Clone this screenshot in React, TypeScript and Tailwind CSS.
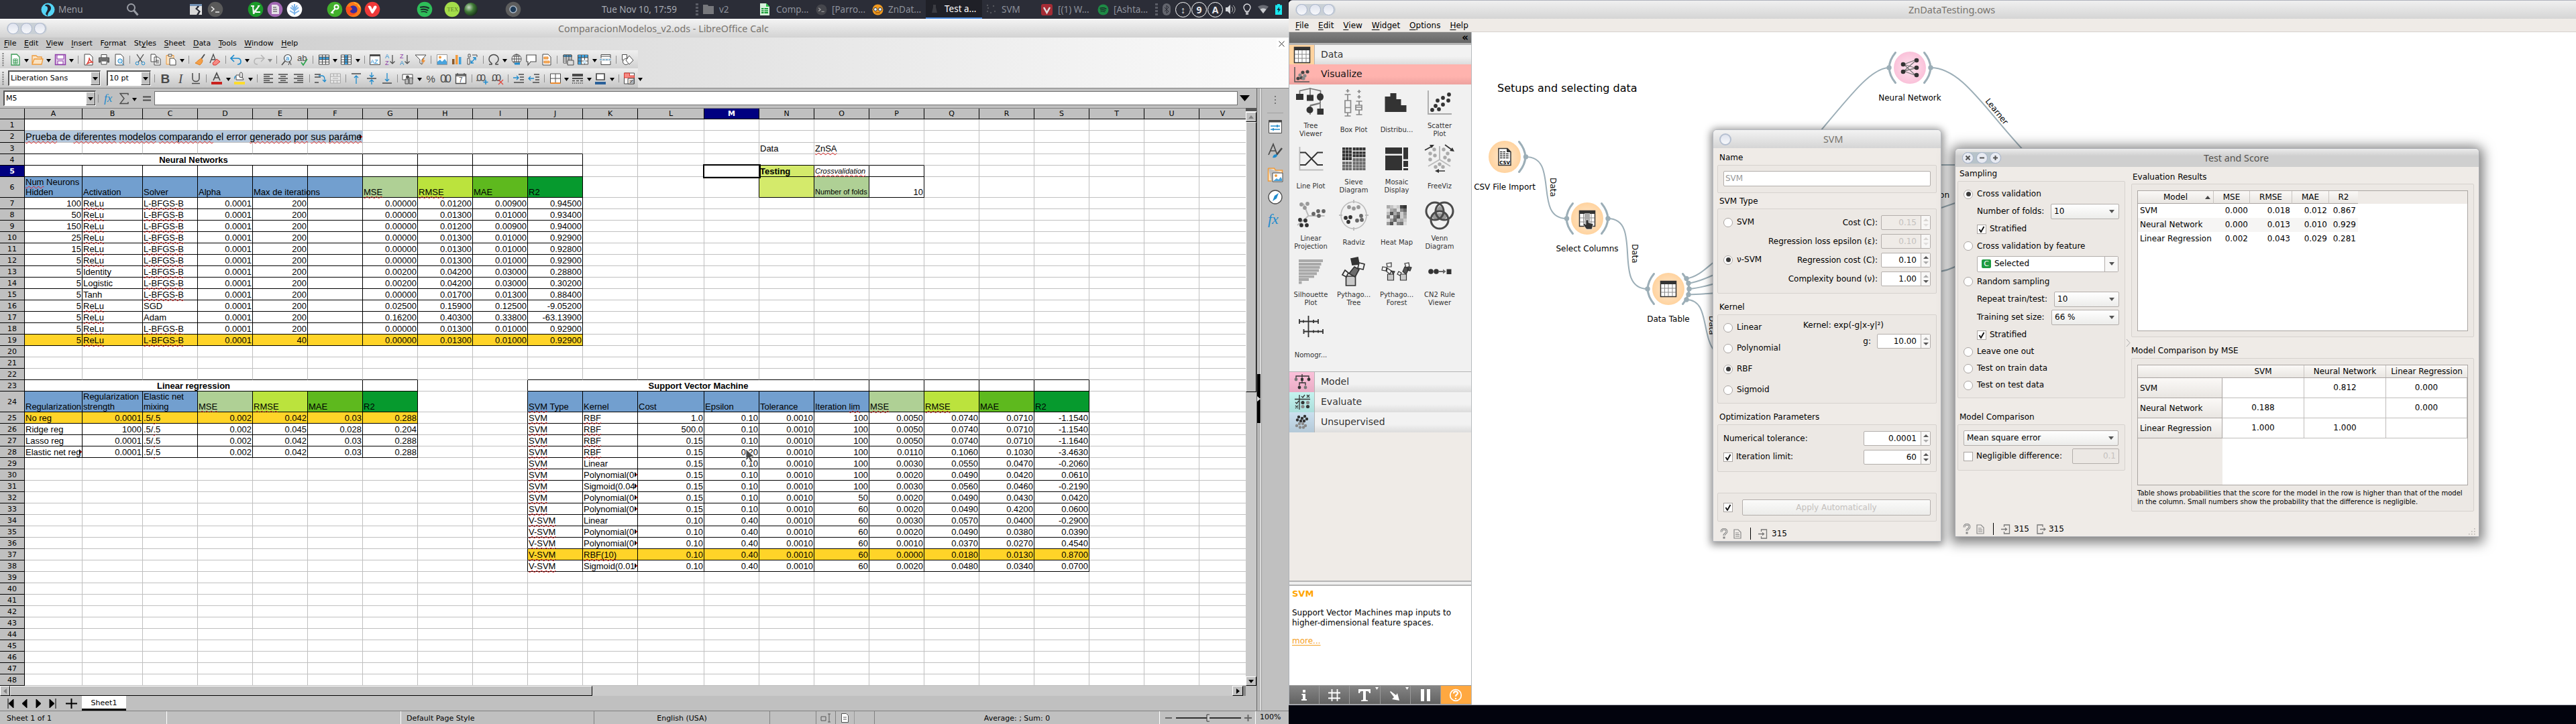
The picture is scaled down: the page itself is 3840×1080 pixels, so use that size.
import React from "react";

type Kids = { children?: React.ReactNode };

/* ------------------------------------------------------------------ */
/* Desktop panel                                                       */
/* ------------------------------------------------------------------ */

function Slot({ w, children }: Kids & { w: string }) {
  return <div className={"flex h-[28px] shrink-0 items-center " + w}>{children}</div>;
}

function Disc({ c, children }: Kids & { c: string }) {
  return (
    <svg className="shrink-0" width="24" height="24" viewBox="0 0 24 24">
      <circle cx="12" cy="12" r="11.3" fill={c} />
      {children}
    </svg>
  );
}

const Spot = ({ c = "#2ebd59", s = "24" }: { c?: string; s?: string }) => (
  <svg className="shrink-0" width={s} height={s} viewBox="0 0 24 24" fill="none" stroke="#1c2a2a" strokeLinecap="round">
    <circle cx="12" cy="12" r="11.3" fill={c} stroke="none" />
    <path d="M6 8.800c4-1.200 8.500-.8 12 1.200" strokeWidth="2.200" />
    <path d="M6.600 12.300c3.500-1 7-.6 10 1.100" strokeWidth="1.800" />
    <path d="M7.200 15.600c3-.8 5.600-.5 8 .9" strokeWidth="1.500" />
  </svg>
);

const Dots = () => (
  <svg width="6" height="20" viewBox="0 0 6 20" fill="#5b5d66">
    <rect x="1" y="1" width="4" height="3" />
    <rect x="1" y="6" width="4" height="3" />
    <rect x="1" y="11" width="4" height="3" />
    <rect x="1" y="16" width="4" height="3" />
  </svg>
);

function Panel() {
  return (
    <div className="flex h-[28px] w-[1921px] items-center overflow-hidden bg-[#2b2d37] font-['Noto_Sans'] text-[13.500px] whitespace-nowrap text-[#8d919b]">
      <Slot w="w-[61px]" />
      <Slot w="w-[26px]">
        <svg width="21" height="21" viewBox="0 0 21 21">
          <circle cx="10.500" cy="10.500" r="10" fill="#54d4f5" />
          <path d="M7 3c4-1 8 1 8 5 0 5-5 5-5 12L7 17c1-4 3-5 3-8S9 5 6 5z" fill="#1f2530" />
        </svg>
      </Slot>
      <Slot w="w-[101px]">
        <span className="text-[#9b9da4]">Menu</span>
      </Slot>
      <Slot w="w-[94px]">
        <svg width="20" height="20" viewBox="0 0 20 20" fill="none" stroke="#9a9da5" strokeWidth="2">
          <circle cx="7.500" cy="7.500" r="5.500" />
          <path d="M11.500 11.500l6 7" strokeWidth="3" />
        </svg>
      </Slot>
      <Slot w="w-[27px]">
        <svg width="20" height="20" viewBox="0 0 20 20">
          <path d="M1 2h9l2 4-3 3 5 4-3 5H1z" fill="#d8d8d8" />
          <path d="M13 2h6v16h-5l3-5-5-4 3-3z" fill="#e5e5e5" />
          <path d="M1 2h18v3H1z" fill="#7391b5" />
        </svg>
      </Slot>
      <Slot w="w-[60px]">
        <Disc c="#5a5a5a">
          <path d="M6 8l4 3.500L6 15M12 16h6" stroke="#eee" strokeWidth="1.500" fill="none" />
        </Disc>
      </Slot>
      <Slot w="w-[29px]">
        <Disc c="#1c9a2b">
          <path d="M5 6h5v2l-1 1 1 5 5-6V6h4l-9 13H8L7 8H5z" fill="#f1f1f1" />
          <path d="M12 16h7" stroke="#fff" strokeWidth="2" />
        </Disc>
      </Slot>
      <Slot w="w-[29px]">
        <Disc c="#a268b3">
          <path d="M7 5h8l3 3v11H7z" fill="#e6e1e8" />
          <path d="M9 9h5M9 12h6M9 15h6" stroke="#777" strokeWidth="1.300" />
        </Disc>
      </Slot>
      <Slot w="w-[60px]">
        <Disc c="#ffffff">
          <path d="M12 4v16M6 9l6 5 6-5M5 14l7 4 7-4M8 6l4 6 4-6" stroke="#7fb6ea" strokeWidth="2" fill="none" />
        </Disc>
      </Slot>
      <Slot w="w-[28px]">
        <Disc c="#42b02c">
          <circle cx="14.500" cy="8.500" r="3" fill="none" stroke="#fff" strokeWidth="2" />
          <path d="M12.500 11l-6 6.500M8 16l2 2" stroke="#fff" strokeWidth="2" />
        </Disc>
      </Slot>
      <Slot w="w-[28px]">
        <Disc c="#ff7a1a">
          <path d="M12 1c6 2 10 5 10.500 10-2-3-4-4-5-7-2 0-4-1-5.500-3z" fill="#ffd43a" />
          <circle cx="11.500" cy="12.500" r="6.200" fill="#3a2f9e" />
          <path d="M1 8c4-1 8 0 9 3 0 2-3 2-3 4 1 3 6 4 9 1 0 4-8 7-12 3-3-3-4-7-3-11z" fill="#ff4f1e" />
        </Disc>
      </Slot>
      <Slot w="w-[78px]">
        <Disc c="#ef3939">
          <path d="M5.500 7.500c2-2 4-1 5 1l1.500 3.500 2-4c1-2 4-2 4.500 0 0 1 0 2-1 3L13 18h-2z" fill="#fff" />
        </Disc>
      </Slot>
      <Slot w="w-[41px]">
        <Spot />
      </Slot>
      <Slot w="w-[29px]">
        <Disc c="#a4dd4a">
          <text x="4.500" y="15" fontSize="8.500" fontFamily="Liberation Serif" fill="#5b7d27">
            TEX
          </text>
        </Disc>
      </Slot>
      <Slot w="w-[62px]">
        <svg width="22" height="22" viewBox="0 0 22 22">
          <defs>
            <radialGradient id="orb" cx=".35" cy=".35" r=".7">
              <stop offset="0" stopColor="#c8d8c4" />
              <stop offset=".5" stopColor="#3f7a35" />
              <stop offset="1" stopColor="#17301a" />
            </radialGradient>
          </defs>
          <circle cx="11" cy="11" r="10" fill="url(#orb)" />
        </svg>
      </Slot>
      <Slot w="w-[144px]">
        <Disc c="#5d5d5d">
          <circle cx="12" cy="12" r="5" fill="#1f3b57" stroke="#a9b6c4" strokeWidth="1.500" />
        </Disc>
      </Slot>
      <Slot w="w-[139px]">
        <span className="text-[#a7abb3]">Tue Nov 10, 17:59</span>
      </Slot>
      <Slot w="w-[12px]">
        <Dots />
      </Slot>
      <Slot w="w-[24px]">
        <svg width="16" height="14" viewBox="0 0 16 14" fill="#77787c">
          <path d="M0 0h7l1 2h8v12H0z" />
        </svg>
      </Slot>
      <Slot w="w-[61px]">v2</Slot>
      <Slot w="w-[24px]">
        <svg width="14" height="18" viewBox="0 0 14 18">
          <path d="M0 0h9l5 5v13H0z" fill="#d6f2da" />
          <path d="M9 0l5 5H9z" fill="#20c840" />
          <path d="M2 7h10v8H2z" fill="#1d9e3b" />
          <path d="M2 9.500h10M2 12h10M6 7v8" stroke="#d6f2da" />
        </svg>
      </Slot>
      <Slot w="w-[59px]">Comp...</Slot>
      <Slot w="w-[24px]">
        <svg width="17" height="17" viewBox="0 0 24 24">
          <circle cx="12" cy="12" r="11.300" fill="#45464c" />
          <path d="M6 8l4 3.500L6 15M12 16h6" stroke="#999" strokeWidth="2" fill="none" />
        </svg>
      </Slot>
      <Slot w="w-[60px]">[Parro...</Slot>
      <Slot w="w-[24px]">
        <svg width="17" height="17" viewBox="0 0 17 17">
          <circle cx="8.500" cy="8.500" r="8" fill="#f0991f" />
          <circle cx="5" cy="8" r="2.500" fill="#e8f4ff" stroke="#333" />
          <circle cx="12" cy="8" r="2.500" fill="#e8f4ff" stroke="#333" />
          <path d="M5 13h7" stroke="#7a3e00" />
        </svg>
      </Slot>
      <Slot w="w-[56px]">ZnDat...</Slot>
      <div className="flex h-[28px] w-[84px] shrink-0 items-center border-b-2 border-[#4a87d8] bg-[#1f2027] pl-[9px] text-white">
        <svg width="8" height="12" viewBox="0 0 8 12" fill="#3b3c42">
          <path d="M2 0h4v4l2 8H0l2-8z" />
        </svg>
        <span className="pl-[11px]">Test a...</span>
      </div>
      <Slot w="w-[29px]">
        <svg className="ml-[6px]" width="16" height="16" viewBox="0 0 16 16" fill="#55575e">
          <circle cx="2" cy="2" r="1.200" />
          <circle cx="3" cy="6" r="1.200" />
          <circle cx="11" cy="3" r="1.200" />
          <circle cx="2" cy="11" r="1.200" />
          <circle cx="7" cy="13" r="1.200" />
          <circle cx="13" cy="11" r="1.200" />
        </svg>
      </Slot>
      <Slot w="w-[59px]">SVM</Slot>
      <Slot w="w-[25px]">
        <svg width="17" height="17" viewBox="0 0 17 17">
          <rect width="17" height="17" rx="3" fill="#a52c35" />
          <path d="M4 5l4.500 8L13 5" stroke="#ddd" strokeWidth="2.500" fill="none" />
        </svg>
      </Slot>
      <Slot w="w-[59px]">[(1) W...</Slot>
      <Slot w="w-[24px]">
        <Spot c="#1e8a45" s="17" />
      </Slot>
      <Slot w="w-[61px]">[Ashta...</Slot>
      <Slot w="w-[12px]">
        <Dots />
      </Slot>
      <Slot w="w-[19px]">
        <svg width="13" height="18" viewBox="0 0 13 18">
          <rect width="12" height="18" rx="6" fill="#63656d" />
          <path d="M3 6l6 6-3 3V3l3 3-6 6" stroke="#2b2d37" fill="none" />
        </svg>
      </Slot>
      {["↕", "9", "A"].map((t) => (
        <Slot key={t} w="w-[24px]">
          <span className="flex size-[23px] items-center justify-center rounded-full border-[1.500px] border-white text-[14px] font-bold text-[#e6e6ea]">{t}</span>
        </Slot>
      ))}
      <Slot w="w-[26px]">
        <svg className="ml-[2px]" width="18" height="16" viewBox="0 0 18 16">
          <path d="M1 5h3l4-4v14l-4-4H1z" fill="#d4d6da" />
          <path d="M10 4c2 2 2 6 0 8M12 2c4 3 4 9 0 12" stroke="#bbb" fill="none" />
        </svg>
      </Slot>
      <Slot w="w-[25px]">
        <svg className="ml-[2px]" width="14" height="18" viewBox="0 0 14 18" fill="none" stroke="#e4e4e8" strokeWidth="1.300">
          <path d="M4.500 12c0-2-2.500-3-2.500-6a5 5 0 0110 0c0 3-2.500 4-2.500 6zM5 14h4M5 16h4" />
        </svg>
      </Slot>
      <Slot w="w-[25px]">
        <svg width="16" height="14" viewBox="0 0 16 14">
          <path d="M0 3c4-3.500 12-3.500 16 0L8 13z" fill="#6a6c74" />
          <path d="M3.500 7c2-2 7-2 9 0L8 13z" fill="#c9cbd0" />
        </svg>
      </Slot>
      <Slot w="w-[12px]">
        <svg width="12" height="16" viewBox="0 0 12 16">
          <path d="M4 0h4v1.500h3V16H1V1.500h3z" fill="#19e6ee" />
          <path d="M7 4L3.500 9H6l-1 4 4-5.500H6.500z" fill="#123" />
        </svg>
      </Slot>
    </div>
  );
}

/* ------------------------------------------------------------------ */
/* Spreadsheet toolbars                                                */
/* ------------------------------------------------------------------ */

const K = "#4a4a4a";
const B = "#1e8bcd";

const sheetIcons: Record<string, React.ReactNode> = {
  new: (
    <>
      <path d="M5 2h8l4 4v12H5z" fill="#fff" stroke="#3a9a56" strokeWidth="1.300" />
      <path d="M8 9h6v7H8zM11 9v7M8 11.500h6M8 14h6" fill="none" stroke="#3a9a56" />
    </>
  ),
  open: <path d="M2 16V4h6l2 2h6v3M2 17l3-8h13l-2 8z" fill="#fbe3c2" stroke="#ed9a3c" strokeWidth="1.300" />,
  save: (
    <>
      <path d="M2.500 2.500h15v15h-15z" fill="#e2c8ea" stroke="#8e3fa8" strokeWidth="1.500" />
      <path d="M5 3h10v6H5zM6 12h8v5H6z" fill="#fff" stroke="#8e3fa8" />
    </>
  ),
  pdf: (
    <>
      <path d="M4 2h8l4 4v12H4z" fill="#fff" stroke={K} />
      <path d="M8 16c4-6 3-8 3-9 0 4 4 7 6 7-3-1-7 1-9 2z" fill="none" stroke="#e0453c" strokeWidth="1.500" />
    </>
  ),
  print: (
    <>
      <path d="M6 2.500h8v5H6zM6 12h8v5H6z" fill="#fff" stroke={K} />
      <path d="M2.500 7h15v7h-2v-3h-11v3h-2z" fill="#777" stroke={K} />
    </>
  ),
  preview: (
    <>
      <path d="M4 2h8l4 4v12H4z" fill="#fff" stroke={K} />
      <circle cx="11" cy="12" r="3.200" fill="#cfe6f7" stroke={B} />
      <path d="M13 14.500l4 4" stroke={B} />
    </>
  ),
  cut: (
    <>
      <path d="M5 2l8 12M15 2L7 14" stroke={K} strokeWidth="1.300" />
      <circle cx="5.500" cy="15.500" r="2.300" fill="none" stroke={B} />
      <circle cx="14.500" cy="15.500" r="2.300" fill="none" stroke={B} />
    </>
  ),
  copy: <path d="M3 2h6l2 3v8H3zM8 6h5l4 3v9H8zM10 11h5M10 13h5M10 15h5" fill="#fff" stroke={K} />,
  paste: (
    <>
      <path d="M3 3.500h11V17H3z" fill="#fbe3c2" stroke="#ed9a3c" />
      <path d="M6 2h5v3H6zM8 8h6l3 3v7H8z" fill="#fff" stroke={K} />
    </>
  ),
  clone: (
    <>
      <path d="M17 2l-5 7" stroke={K} strokeWidth="1.800" />
      <path d="M12 8l-3 2c-3 2-4 4-6 5l7 3c2-2 4-4 4-7z" fill="#f3a04a" stroke="#e07f1c" />
    </>
  ),
  clear: (
    <>
      <path d="M3 15L8 2l4 11M5 10h5" stroke={K} strokeWidth="1.300" fill="none" />
      <path d="M7 15l6-6 5 4-6 5H8z" fill="#f58b85" stroke="#d8352c" />
    </>
  ),
  undo: <path d="M7 3L2 8l5 5M2.500 8H12c3 0 5 2 5 5s-2 4-5 4" fill="none" stroke={B} strokeWidth="1.700" />,
  redo: <path d="M13 3l5 5-5 5M17.500 8H8c-3 0-5 2-5 5s2 4 5 4" fill="none" stroke="#b5b5b5" strokeWidth="1.500" />,
  find: (
    <>
      <circle cx="11" cy="8" r="5.500" fill="#eef6fc" stroke={K} strokeWidth="1.200" />
      <path d="M7 12l-5 6" stroke={K} strokeWidth="1.500" />
      <text x="8" y="11" fontSize="9" fill={B} fontFamily="Liberation Sans">
        a
      </text>
      <path d="M12 18l2-5 2 5" stroke={K} fill="none" />
    </>
  ),
  spell: (
    <>
      <text x="2" y="12" fontSize="13" fill={K} fontFamily="Liberation Sans">
        ab
      </text>
      <path d="M8 14l3 4 6-9" stroke="#2da44e" strokeWidth="1.700" fill="none" />
    </>
  ),
  rows: (
    <>
      <path d="M2.500 3h15v14h-15z" fill="#fff" stroke={K} />
      <path d="M3 6h14v4H3z" fill="#3fa0dc" />
      <path d="M2.500 6h15M2.500 10h15M2.500 13.500h15M7.500 3v14M12.500 3v14" stroke={K} fill="none" />
    </>
  ),
  cols: (
    <>
      <path d="M2.500 3h15v14h-15z" fill="#fff" stroke={K} />
      <path d="M7.500 3h5v14h-5z" fill="#3fa0dc" />
      <path d="M2.500 6h15M2.500 10h15M2.500 13.500h15M7.500 3v14M12.500 3v14" stroke={K} fill="none" />
    </>
  ),
  sort: (
    <>
      <path d="M2.500 2.500h15v15h-15z" fill="#fff" stroke={K} />
      <path d="M2.500 2.500h15v2.500h-15z" fill={K} />
      <text x="3" y="15.500" fontSize="9" fill={B} fontFamily="Liberation Sans">
        AZ
      </text>
    </>
  ),
  asc: (
    <>
      <text x="2" y="8" fontSize="9" fill={B} fontFamily="Liberation Sans">
        A
      </text>
      <text x="2" y="18" fontSize="9" fill="#8e3fa8" fontFamily="Liberation Sans">
        Z
      </text>
      <path d="M13 3v13M9.500 12.500L13 16l3.500-3.500" stroke={K} fill="none" strokeWidth="1.200" />
    </>
  ),
  desc: (
    <>
      <text x="2" y="8" fontSize="9" fill="#8e3fa8" fontFamily="Liberation Sans">
        Z
      </text>
      <text x="2" y="18" fontSize="9" fill={B} fontFamily="Liberation Sans">
        A
      </text>
      <path d="M13 3v13M9.500 12.500L13 16l3.500-3.500" stroke={K} fill="none" strokeWidth="1.200" />
    </>
  ),
  filter: (
    <>
      <path d="M2 3h16l-6 7v7l-3-2v-5z" fill="#fff" stroke={K} />
      <path d="M14 8l-3 5h3l-2 5 5-7h-3l2-3z" fill="#ef8b2c" />
    </>
  ),
  image: (
    <>
      <path d="M2.500 2.500h15v15h-15z" fill="#fff" stroke="#999" />
      <circle cx="7" cy="6.500" r="2" fill="#f29b3d" />
      <path d="M3 17v-4l4-3 3 3 4-4 3 4v4z" fill="#4aa3dc" />
    </>
  ),
  chart: (
    <>
      <path d="M3 9h3.500v8H3z" fill="#8a5a2a" />
      <path d="M8 3h3.500v14H8z" fill="#f29b3d" />
      <path d="M13 6h3.500v11H13z" fill="#3fa0dc" />
    </>
  ),
  pivot: (
    <>
      <path d="M4 2h3v4H4zM10 3h7M3 8v9h3V8zM17 3v3" stroke={K} fill="#fff" />
      <path d="M8 15l7-8M11 7h4v4M8 11v4h4" stroke={B} fill="none" strokeWidth="1.300" />
    </>
  ),
  omega: (
    <path d="M3 17h4v-1.500C4 13.500 3 11 3 9a7 6.500 0 0114 0c0 2-1 4.500-4 6.500V17h4" fill="none" stroke={K} strokeWidth="1.500" />
  ),
  link: (
    <>
      <circle cx="10" cy="9" r="7" fill="#fff" stroke={K} />
      <path d="M3 9h14M10 2v14M5 5h10M5 13h10" stroke={K} fill="none" />
      <ellipse cx="10" cy="9" rx="3.500" ry="7" fill="none" stroke={K} />
      <path d="M7 16h8" stroke={B} strokeWidth="3" />
    </>
  ),
  comment: <path d="M3 3h14v10H9l-4 5v-5H3z" fill="#fff" stroke={K} strokeWidth="1.200" />,
  header: (
    <>
      <path d="M4 2h8l4 4v12H4z" fill="#fff" stroke={K} />
      <path d="M6 6h6v3H6zM6 12h8v3H6z" fill="#f2b36b" stroke="#ef8b2c" />
    </>
  ),
  area: (
    <>
      <path d="M3 3h12v12H3z" fill="#fff" stroke={K} />
      <path d="M3 3h12v3H3z" fill="#3fa0dc" stroke={K} />
      <path d="M3 9h12M3 12h12M7 3v12M11 3v12" stroke={K} />
      <path d="M9 11h9v7H9z" fill="#ddd" stroke={K} />
    </>
  ),
  freeze: (
    <>
      <path d="M2.500 3h15v14h-15z" fill="#fff" stroke={K} />
      <path d="M3 3h4.500v14H3zM3 3h14v4H3z" fill="#3fa0dc" />
      <path d="M2.500 7h15M2.500 12h15M7.500 3v14M12.500 3v14" stroke={K} fill="none" />
      <path d="M8 15l5-5 3 6z" fill="#cfe8f8" />
    </>
  ),
  split: (
    <>
      <path d="M3 8V2.500h14V8M3 12v5.500h14V12" fill="#fff" stroke={K} />
      <path d="M3 5h14" stroke={K} />
      <path d="M1 10h18" stroke={B} strokeDasharray="3 1.500" />
    </>
  ),
  shapes: (
    <>
      <path d="M2.500 2.500h7v8h-7z" fill="#fff" stroke={K} />
      <circle cx="8" cy="13" r="4.500" fill="#fff" stroke={K} />
      <path d="M13 4l6 7-6 6-5-6z" fill="#fff" stroke={K} />
    </>
  ),
  bold: (
    <text x="3.500" y="17" fontSize="19" fontWeight="700" fill={K} fontFamily="Liberation Sans">
      B
    </text>
  ),
  italic: (
    <text x="7" y="17" fontSize="19" fontStyle="italic" fill={K} fontFamily="Liberation Serif">
      I
    </text>
  ),
  under: (
    <>
      <path d="M5 2v8c0 6 10 6 10 0V2M4 17.500h12" fill="none" stroke={K} strokeWidth="1.500" />
    </>
  ),
  fcolor: (
    <>
      <path d="M5 13l5-11 5 11M7 9h6" fill="none" stroke={K} strokeWidth="1.700" />
      <path d="M2 15h16v4H2z" fill="#c9211e" />
    </>
  ),
  hcolor: (
    <>
      <path d="M5 12V5h8l3 7z" fill="#fff" stroke={K} />
      <path d="M12 1c3 0 3 3 2 8l-4-1c0-3 0-7 2-7z" fill="#ddd" stroke={K} />
      <path d="M5 6c-3 0-3 3-3 6z" fill={B} />
      <path d="M2 15h16v4H2z" fill="#fddc2c" />
    </>
  ),
  left: <path d="M3 4h14M3 7h9M3 10h14M3 13h9M3 16h14" stroke={K} strokeWidth="1.300" />,
  center: <path d="M3 4h14M6 7h8M3 10h14M6 13h8M3 16h14" stroke={K} strokeWidth="1.300" />,
  right: <path d="M3 4h14M8 7h9M3 10h14M8 13h9M3 16h14" stroke={K} strokeWidth="1.300" />,
  wrap: (
    <>
      <path d="M2 4h9M2 8h9M2 16h6" stroke={K} strokeWidth="1.300" />
      <path d="M8 6h5c4 0 4 4 4 8M14 12l3 3 2-3" stroke={B} fill="none" strokeWidth="1.300" />
    </>
  ),
  merge: <path d="M2.500 3h15v14h-15zM2.500 7h15M2.500 13h15M7.500 3v4M12.500 3v4M7.500 13v4M12.500 13v4M6 10h8" fill="#e8e8e8" stroke="#aaa" />,
  top: (
    <>
      <path d="M3 3h14" stroke={K} strokeWidth="1.500" />
      <path d="M10 18V6M7 9l3-3 3 3" stroke={B} fill="none" strokeWidth="1.300" />
    </>
  ),
  middle: (
    <>
      <path d="M3 10h14" stroke={K} strokeWidth="1.500" />
      <path d="M10 1v7M7 5l3 3 3-3M10 19v-7M7 15l3-3 3 3" stroke={B} fill="none" strokeWidth="1.300" />
    </>
  ),
  bottom: (
    <>
      <path d="M3 17h14" stroke={K} strokeWidth="1.500" />
      <path d="M10 2v12M7 11l3 3 3-3" stroke={B} fill="none" strokeWidth="1.300" />
    </>
  ),
  money: (
    <>
      <path d="M2 4h15v8H2z" fill="#fff" stroke={K} />
      <circle cx="9.500" cy="8" r="2.500" fill={K} />
      <path d="M6 11h5v7H6zM12 9h5v9h-5z" fill="#bbb" stroke={K} />
    </>
  ),
  percent: (
    <text x="3.500" y="15.500" fontSize="15" fill={K} fontFamily="Liberation Sans">
      %
    </text>
  ),
  number: (
    <text x="1" y="16" fontSize="17" fill={K} fontFamily="Liberation Sans" textLength="17">
      0.0
    </text>
  ),
  date: (
    <>
      <path d="M2.500 4h15v13.500h-15zM2.500 6h15M5 2v3M15 2v3" fill="#fff" stroke={K} strokeWidth="1.300" />
      <text x="7" y="16" fontSize="10" fill={K} fontFamily="Liberation Sans">
        7
      </text>
    </>
  ),
  addDec: (
    <>
      <text x="0" y="14" fontSize="15" fill={K} fontFamily="Liberation Sans" textLength="15">
        .00
      </text>
      <path d="M15 12v7M11.500 15.500h7" stroke={B} strokeWidth="1.500" />
    </>
  ),
  delDec: (
    <>
      <text x="0" y="14" fontSize="15" fill={K} fontFamily="Liberation Sans" textLength="15">
        .00
      </text>
      <path d="M11 12l7 7M18 12l-7 7" stroke="#e0453c" strokeWidth="1.300" />
    </>
  ),
  indent: (
    <>
      <path d="M10 4h8M12 8h6M12 12h6M3 16h15" stroke={K} strokeWidth="1.300" />
      <path d="M2 9h8M7 6l3 3-3 3" stroke={B} fill="none" strokeWidth="1.300" />
    </>
  ),
  outdent: (
    <>
      <path d="M10 4h8M12 8h6M12 12h6M8 16h10" stroke={K} strokeWidth="1.300" />
      <path d="M2 10h8M5 7l-3 3 3 3" stroke={B} fill="none" strokeWidth="1.300" />
    </>
  ),
  borders: (
    <>
      <path d="M2.500 3h15v14h-15zM10 3v14M2.500 10h15" fill="#fff" stroke={K} />
      <path d="M2.500 17h15" stroke="#ef8b2c" strokeWidth="2" />
    </>
  ),
  bstyle: (
    <>
      <path d="M2 3h16v4H2zM2 9h16v2H2z" fill={K} />
      <path d="M2 13.500h16" stroke={K} strokeDasharray="4 2" strokeWidth="1.500" />
      <path d="M2 17h16" stroke={K} strokeDasharray="1.500 1.500" strokeWidth="1.500" />
    </>
  ),
  bcolor: (
    <>
      <path d="M4 3h12v9H4z" fill="#fff" stroke={K} strokeWidth="1.700" />
      <path d="M2 15h16v4H2z" fill="#2a6099" />
    </>
  ),
  cond: (
    <>
      <path d="M2.500 2h15v16h-15z" fill="#fff" stroke={K} />
      <path d="M2.500 2h8v4h7v3h-15z" fill="#f58b85" stroke="#d8352c" />
      <path d="M8 10h9v8H8z" fill="#eee" stroke={K} />
      <text x="9.500" y="17" fontSize="9" fill={K} fontFamily="DejaVu Sans">
        ≠
      </text>
    </>
  ),
};

const line1 =
  "new ▾ open ▾ save ▾ | pdf print preview | cut copy paste ▾ | clone clear | undo ▾ redo ▿ | find spell | rows ▾ cols ▾ | sort asc desc filter | image chart pivot | omega ▾ link comment header | area freeze ▾ split | shapes";
const line2 =
  "| bold italic under | fcolor ▾ hcolor ▾ | left center right | wrap merge | top middle bottom | money ▾ percent number date | addDec delDec | indent outdent | borders ▾ bstyle ▾ bcolor ▾ | cond ▾";

function ToolItems({ spec }: { spec: string }) {
  return (
    <>
      {spec.split(" ").map((n, i) => {
        if (n === "|")
          return (
            <span key={i} className="flex w-[9px] shrink-0 justify-center">
              <span className="h-[12px] w-px bg-[#8f8f8f]" />
            </span>
          );
        if (n === "▾" || n === "▿")
          return (
            <span key={i} className="flex w-[11px] shrink-0 justify-center pt-[3px]">
              <svg width="7" height="5" viewBox="0 0 7 5">
                <path d="M0 0h7L3.500 5z" fill={n === "▾" ? "#000" : "#8a8a8a"} />
              </svg>
            </span>
          );
        return (
          <span key={i} className="flex w-[22.700px] shrink-0 justify-center">
            <svg width="20" height="20" viewBox="0 0 20 20" fill="none">
              {sheetIcons[n]}
            </svg>
          </span>
        );
      })}
    </>
  );
}

function Combo({ text, w }: { text: string; w: string }) {
  return (
    <div className={"flex h-[23px] shrink-0 border-t-2 border-l-2 border-r border-b border-t-[#555] border-r-white border-b-white border-l-[#555] bg-white " + w}>
      <span className="flex-1 pl-[2px] text-[11px] leading-[20px]">{text}</span>
      <span className="flex w-[14px] items-center justify-center border border-t-white border-r-[#333] border-b-[#333] border-l-white bg-[#c0c0c0]">
        <svg width="8" height="5" viewBox="0 0 8 5">
          <path d="M0 0h8L4 5z" />
        </svg>
      </span>
    </div>
  );
}

const Grip = () => (
  <svg className="shrink-0" width="11" height="20" viewBox="0 0 11 20">
    <path d="M4.500 0v20" stroke="#777" strokeWidth="2" strokeDasharray="2 1.500" />
  </svg>
);

const TitleDots = () => (
  <span className="flex h-[17px] items-center gap-[3px] rounded-full bg-[#c9d0d6] px-[1px]">
    {[0, 1, 2].map((i) => (
      <span key={i} className="size-[17px] rounded-full border border-[#a9b4cc] bg-linear-to-b from-[#dfe3ee] to-[#f7f8fb]" />
    ))}
  </span>
);

/* ------------------------------------------------------------------ */
/* Spreadsheet grid                                                    */
/* ------------------------------------------------------------------ */

const colNames = "ABCDEFGHIJKLMNOPQRSTUV".split("");
const colWidth = (c: number) =>
  c === 0 ? "w-[86px]" : c === 1 ? "w-[90px]" : c === 11 ? "w-[99px]" : c === 21 ? "w-[70px]" : "w-[82px]";

type Cell = { t: string; sq?: boolean; bg?: string; b?: boolean; r?: boolean; cls?: string; cut?: boolean };
const cells: Record<string, Cell> = {};
const BLUE = "bg-[#729fcf]";
const GOLD = "bg-[#ffd428]";
const metricBg = ["bg-[#afd095]", "bg-[#bbe33d]", "bg-[#5eb91e]", "bg-[#069a2e]"];

function put(row: number, start: number, items: string[], bg?: string) {
  items.forEach((raw, i) => {
    const sq = raw.startsWith("~");
    const cut = raw.endsWith(">");
    const t = raw.replace(/^~/, "").replace(/>$/, "");
    cells[row + ":" + (start + i)] = { t, sq, cut, bg, r: /^-?\d+(\.\d+)?$/.test(t) };
  });
}

const nn: [string, string, string, string, string, string, string, string][] = [
  ["100", "~ReLu", "~L-BFGS-B", "200", "0.00000", "0.01200", "0.00900", "0.94500"],
  ["50", "~ReLu", "~L-BFGS-B", "200", "0.00000", "0.01300", "0.01000", "0.93400"],
  ["150", "~ReLu", "~L-BFGS-B", "200", "0.00000", "0.01200", "0.00900", "0.94000"],
  ["25", "~ReLu", "~L-BFGS-B", "200", "0.00000", "0.01300", "0.01000", "0.92900"],
  ["15", "~ReLu", "~L-BFGS-B", "200", "0.00000", "0.01300", "0.01000", "0.92800"],
  ["5", "~ReLu", "~L-BFGS-B", "200", "0.00000", "0.01300", "0.01000", "0.92900"],
  ["5", "Identity", "~L-BFGS-B", "200", "0.00200", "0.04200", "0.03000", "0.28800"],
  ["5", "Logistic", "~L-BFGS-B", "200", "0.00200", "0.04200", "0.03000", "0.30200"],
  ["5", "Tanh", "~L-BFGS-B", "200", "0.00000", "0.01700", "0.01300", "0.88400"],
  ["5", "~ReLu", "SGD", "200", "0.02500", "0.15900", "0.12500", "-9.05200"],
  ["5", "~ReLu", "Adam", "200", "0.16200", "0.40300", "0.33800", "-63.13900"],
  ["5", "~ReLu", "~L-BFGS-B", "200", "0.00000", "0.01300", "0.01000", "0.92900"],
  ["5", "~ReLu", "~L-BFGS-B", "40", "0.00000", "0.01300", "0.01000", "0.92900"],
];
put(6, 0, ["Num Neurons Hidden", "Activation", "Solver", "Alpha", "Max de iterations", ""], BLUE);
["~MSE", "~RMSE", "MAE", "R2"].forEach((m, i) => {
  put(6, 6 + i, [m], metricBg[i]);
  put(24, 3 + i, [m], metricBg[i]);
  put(24, 15 + i, [m], metricBg[i]);
});
nn.forEach((v, i) => put(7 + i, 0, [v[0], v[1], v[2], "0.0001", v[3], "", v[4], v[5], v[6], v[7]], i === 12 ? GOLD : undefined));
put(24, 0, ["Regularization", "Regularization strength", "Elastic net mixing"], BLUE);
put(25, 0, ["No reg", "0.0001", ".5/.5", "0.002", "0.042", "0.03", "0.288"], GOLD);
put(26, 0, ["Ridge reg", "1000", ".5/.5", "0.002", "0.045", "0.028", "0.204"]);
put(27, 0, ["Lasso reg", "0.0001", ".5/.5", "0.002", "0.042", "0.03", "0.288"]);
put(28, 0, ["Elastic net reg>", "0.0001", ".5/.5", "0.002", "0.042", "0.03", "0.288"]);
put(24, 9, ["SVM Type", "Kernel", "Cost", "Epsilon", "Tolerance", "Iteration lim"], BLUE);
const svm = [
  "~SVM|~RBF|1.0|0.10|100|0.0050|0.0740|0.0710|-1.1540",
  "~SVM|~RBF|500.0|0.10|100|0.0050|0.0740|0.0710|-1.1540",
  "~SVM|~RBF|0.15|0.10|100|0.0050|0.0740|0.0710|-1.1640",
  "~SVM|~RBF|0.15|0.20|100|0.0110|0.1060|0.1030|-3.4630",
  "~SVM|Linear|0.15|0.10|100|0.0030|0.0550|0.0470|-0.2060",
  "~SVM|Polynomial(0>|0.15|0.10|100|0.0020|0.0490|0.0420|0.0610",
  "~SVM|Sigmoid(0.04>|0.15|0.10|100|0.0030|0.0560|0.0460|-0.2190",
  "~SVM|Polynomial(0>|0.15|0.10|50|0.0020|0.0490|0.0430|0.0420",
  "~SVM|Polynomial(0>|0.15|0.10|60|0.0020|0.0490|0.4200|0.0600",
  "~V-SVM|Linear|0.10|0.40|60|0.0030|0.0570|0.0400|-0.2900",
  "~V-SVM|Polynomial(0>|0.10|0.40|60|0.0020|0.0490|0.0380|0.0390",
  "~V-SVM|Polynomial(0>|0.10|0.40|60|0.0010|0.0370|0.0270|0.4540",
  "~V-SVM|~RBF(10)|0.10|0.40|60|0.0000|0.0180|0.0130|0.8700",
  "~V-SVM|Sigmoid(0.01>|0.10|0.40|60|0.0020|0.0480|0.0340|0.0700",
];
svm.forEach((s, i) => {
  const v = s.split("|");
  put(25 + i, 9, [v[0], v[1], v[2], v[3], "0.0010", ...v.slice(4)], i === 12 ? GOLD : undefined);
});
cells["3:13"] = { t: "Data" };
cells["3:14"] = { t: "ZnSA", sq: true };
cells["5:13"] = { t: "Testing", b: true, bg: "bg-[#d4ea6b]" };
cells["5:14"] = { t: "Crossvalidation", sq: true, cls: "italic text-[11px]" };
cells["6:13"] = { t: "", bg: "bg-[#d4ea6b]" };
cells["6:14"] = { t: "Number of folds", bg: "bg-[#afd095]", cls: "text-[11px]" };
cells["6:15"] = { t: "10", r: true };

const partial: Record<string, [string, string, string]> = {
  "Num Neurons Hidden": ["", "Num", " Neurons Hidden"],
  "SVM Type": ["", "SVM", " Type"],
  "Iteration lim": ["Iteration ", "lim", ""],
  ".5/.5": [".5/", ".", "5"],
};
const WAVE = "underline decoration-[#e02020] decoration-wavy decoration-1 underline-offset-[1px] [text-decoration-skip-ink:none]";

function inTable(r: number, c: number) {
  if (c >= 0 && c <= 9 && r >= 4 && r <= 19) return true;
  if (c >= 0 && c <= 6 && r >= 23 && r <= 28) return true;
  if (c >= 9 && c <= 18 && r >= 23 && r <= 38) return true;
  if (c >= 13 && c <= 15 && r >= 5 && r <= 6) return true;
  return false;
}

function rowH(r: number) {
  return r === 2 ? "h-[18px]" : r === 6 || r === 24 ? "h-[31px]" : "h-[17px]";
}

function GridCell({ r, c }: { r: number; c: number }) {
  const d = cells[r + ":" + c];
  const right = inTable(r, c) || inTable(r, c + 1);
  const bottom = inTable(r, c) || inTable(r + 1, c);
  const base =
    "relative flex shrink-0 items-end border-r border-b " +
    colWidth(c) +
    (right ? " border-r-black" : " border-r-[#c0c0c0]") +
    (bottom ? " border-b-black" : " border-b-[#c0c0c0]");
  if (!d) return <div className={base + (r === 5 && c === 12 ? " outline-2 outline-black z-10" : "")} />;
  const p = partial[d.t];
  const wraps = d.t === "Num Neurons Hidden" || d.t === "Regularization strength" || d.t === "Elastic net mixing";
  return (
    <div className={base + " px-[1px] " + (d.bg || "") + (d.r ? " justify-end" : "") + (d.t.startsWith("Max") ? " z-10" : "")}>
      <span className={(wraps ? "whitespace-normal -mr-[4px] " : "whitespace-nowrap ") + (d.b ? "font-bold " : "") + (d.cls || "") + (d.sq ? " " + WAVE : "")}>
        {p ? (
          <>
            {p[0]}
            <span className={WAVE}>{p[1]}</span>
            {p[2]}
          </>
        ) : (
          d.t
        )}
      </span>
      {d.cut && (
        <svg className="absolute top-[4px] right-0" width="4" height="8" viewBox="0 0 4 8">
          <path d="M0 0l4 4-4 4z" />
          <path d="M2 2.500l2 1.500-2 1.500z" fill="#f00" />
        </svg>
      )}
    </div>
  );
}

function Merged({ text, w }: { text: string; w: string }) {
  return <div className={"shrink-0 border-r border-b border-black text-center leading-[17px] font-bold " + w}>{text}</div>;
}

function GridRow({ r }: { r: number }) {
  const out: React.ReactNode[] = [];
  for (let c = 0; c < 22; c++) {
    if (r === 2 && c === 0) {
      out.push(
        <div key={c} className="relative w-[504px] shrink-0 border-b border-[#c0c0c0] bg-[#b4c7dc] pl-[1px] text-[14.600px] leading-[18px] whitespace-nowrap">
          <span className={WAVE}>Prueba</span> de <span className={WAVE}>diferentes</span> <span className={WAVE}>modelos</span>{" "}
          <span className={WAVE}>comparando</span> el error <span className={WAVE}>generado</span> <span className={WAVE}>por</span>{" "}
          <span className={WAVE}>sus</span> <span className={WAVE}>paráme</span>
          <svg className="absolute top-[5px] right-[1px]" width="4" height="8" viewBox="0 0 4 8">
            <path d="M0 0l4 4-4 4z" />
            <path d="M2 2.500l2 1.500-2 1.500z" fill="#f00" />
          </svg>
        </div>,
      );
      c = 5;
    } else if ((r === 4 || r === 23) && c === 0) {
      out.push(<Merged key={c} w="w-[504px]" text={r === 4 ? "Neural Networks" : "Linear regression"} />);
      c = 5;
    } else if (r === 23 && c === 9) {
      out.push(<Merged key={c} w="w-[509px]" text="Support Vector Machine" />);
      c = 14;
    } else out.push(<GridCell key={c} r={r} c={c} />);
  }
  return (
    <div className={"flex w-[1857px] shrink-0 " + rowH(r)}>
      <div
        className={
          "flex w-[37px] shrink-0 items-center justify-center border-r border-b border-black font-['DejaVu_Sans'] text-[11px] " +
          (r === 5 ? "bg-[#000080] font-bold text-white" : "bg-[#c0c0c0]")
        }
      >
        {r}
      </div>
      {out}
    </div>
  );
}

function Sheet() {
  return (
    <div className="relative flex h-[862px] w-[1857px] flex-col overflow-hidden bg-white font-['Liberation_Sans'] text-[13px] leading-[15px] text-black">
      <div className="flex h-[17px] shrink-0 border-t border-b border-t-[#808080] border-b-black bg-[#c0c0c0] font-['DejaVu_Sans'] text-[11px]">
        <div className="w-[37px] shrink-0 border-r border-black" />
        {colNames.map((n, i) => (
          <div key={n} className={"shrink-0 border-r border-black text-center " + colWidth(i) + (n === "M" ? " bg-[#000080] font-bold text-white" : "")}>
            {n}
          </div>
        ))}
      </div>
      {Array.from({ length: 48 }, (_, i) => (
        <GridRow key={i} r={i + 1} />
      ))}
      <svg className="absolute top-[508px] left-[1111px] z-20" width="14" height="22" viewBox="0 0 14 22">
        <path d="M1 1l12 11-5 .5 3 7-3 1.500-3-7-4 4z" fill="#4a4a4a" stroke="#e6e6e6" />
      </svg>
    </div>
  );
}

/* ------------------------------------------------------------------ */
/* Spreadsheet window                                                  */
/* ------------------------------------------------------------------ */

const bevel = "border border-t-white border-l-white border-r-black border-b-black bg-[#c0c0c0]";

function Menu({ items, className }: { items: string[]; className: string }) {
  return (
    <div className={"flex items-center " + className}>
      {items.map((m) => {
        const i = m.indexOf("_");
        return (
          <span key={m}>
            {m.slice(0, i)}
            <span className="underline underline-offset-2">{m[i + 1]}</span>
            {m.slice(i + 2)}
          </span>
        );
      })}
    </div>
  );
}

const side = (d: React.ReactNode) => (
  <svg width="24" height="24" viewBox="0 0 24 24" fill="none">
    {d}
  </svg>
);

function CalcWindow() {
  return (
    <div className="flex h-[1052px] w-[1921px] flex-col bg-[#c0c0c0] font-['DejaVu_Sans'] text-[11px] text-black">
      <div className="flex h-[28px] items-center border-t border-white bg-linear-to-b from-[#f3f3f3] to-[#d3d3d3]">
        <div className="w-[832px] pl-[10px]">
          <div className="w-[60px]">
            <TitleDots />
          </div>
        </div>
        <span className="font-['Noto_Sans'] text-[14.300px] whitespace-nowrap text-[#77736d]">ComparacionModelos_v2.ods - LibreOffice Calc</span>
      </div>
      <div className="flex h-[75px] bg-linear-to-r from-[#c6c6c6] to-[#fbfbfb]">
        <div className="flex w-[951px] flex-col">
          <Menu className="h-[19px] gap-[11.500px] pl-[6px]" items={["_File", "_Edit", "_View", "_Insert", "F_ormat", "St_yles", "_Sheet", "_Data", "_Tools", "_Window", "_Help"]} />
          <div className="flex h-[27px] items-center bg-linear-to-b from-[#efefef] to-[#d2d2d2]">
            <Grip />
            <ToolItems spec={line1} />
          </div>
          <div className="flex h-[29px] items-center bg-linear-to-b from-[#efefef] to-[#c6c6c6]">
            <Grip />
            <Combo text="Liberation Sans" w="w-[138px] ml-[1px]" />
            <Combo text="10 pt" w="w-[66px] ml-[9px] mr-[1px]" />
            <ToolItems spec={line2} />
          </div>
        </div>
        <div className="flex flex-1 justify-end">
          <span className="mt-[2px] mr-[3px] flex h-[15px] w-[15px] items-center justify-center bg-white">
            <svg width="9" height="9" viewBox="0 0 9 9" stroke="#333">
              <path d="M.5.5l8 8M8.500.5l-8 8" />
            </svg>
          </span>
        </div>
      </div>
      <div className="flex h-[929px] border-t border-[#808080]">
        <div className="flex w-[1873px] flex-col">
          <div className="flex h-[29px] items-center">
            <Combo text="M5" w="w-[138px] ml-[5px] mr-[3px]" />
            <span className="h-[12px] w-px bg-[#8f8f8f]" />
            <svg className="ml-[8px]" width="18" height="20" viewBox="0 0 18 20">
              <text x="0" y="15" fontSize="17" fontStyle="italic" fill={B} fontFamily="Liberation Serif">
                fx
              </text>
            </svg>
            <svg className="ml-[5px]" width="14" height="20" viewBox="0 0 14 20" fill="none" stroke={K} strokeWidth="1.400">
              <path d="M13 5V2.500H1l6 7.500-6 7.500h12V15" />
            </svg>
            <svg className="mt-[3px] ml-[5px]" width="7" height="5" viewBox="0 0 7 5">
              <path d="M0 0h7L3.500 5z" />
            </svg>
            <svg className="ml-[8px]" width="14" height="10" viewBox="0 0 14 10" stroke={K} strokeWidth="2">
              <path d="M1 2.500h12M1 7.500h12" />
            </svg>
            <div className="ml-[4px] h-[21px] w-[1615px] border border-[#707070] bg-white" />
            <svg className="ml-[3px]" width="15" height="9" viewBox="0 0 15 9">
              <path d="M0 0h15L7.500 9z" />
            </svg>
          </div>
          <div className="flex h-[862px]">
            <Sheet />
            <div className="flex w-[16px] flex-col bg-[#c9c9c9]">
              <div className="h-[6px] border-b border-white bg-[#555]" />
              <div className={"flex h-[15px] items-center justify-center " + bevel}>
                <svg width="8" height="5" viewBox="0 0 8 5">
                  <path d="M0 5h8L4 0z" fill="#808080" />
                </svg>
              </div>
              <div className={"h-[403px] " + bevel} />
              <div className="flex-1" />
              <div className={"flex h-[14px] items-center justify-center " + bevel}>
                <svg width="8" height="5" viewBox="0 0 8 5">
                  <path d="M0 0h8L4 5z" />
                </svg>
              </div>
            </div>
          </div>
          <div className="flex h-[15px] w-[1857px] bg-[#cbcbcb]">
            <div className={"flex w-[15px] items-center justify-center " + bevel}>
              <svg width="5" height="8" viewBox="0 0 5 8">
                <path d="M5 0v8L0 4z" fill="#808080" />
              </svg>
            </div>
            <div className={"w-[868px] " + bevel} />
            <div className="flex-1" />
            <div className={"flex w-[16px] items-center justify-center " + bevel}>
              <svg width="5" height="8" viewBox="0 0 5 8">
                <path d="M0 0v8l5-4z" />
              </svg>
            </div>
            <div className="w-[4px] bg-[#888]" />
          </div>
          <div className="flex h-[22px] items-start">
            <svg className="mt-[3px]" width="122" height="17" viewBox="0 0 122 17">
              <path d="M12 1v15M20 2v13l-7-6.500zM40 2v13l-7-6.500zM54 2v13l7-6.500zM74 2v13l7-6.500zM83 1v15" stroke="#000" />
              <path d="M98 8.500h17M106.500 1v15" stroke="#000" strokeWidth="2" />
            </svg>
            <div className="h-[22px] w-[66px] border-b-[3px] border-black bg-white pt-[3px] text-center">Sheet1</div>
          </div>
        </div>
        <div className="flex w-[7px] flex-col border-r border-l border-r-white border-l-[#666] bg-[#b8b8b8]">
          <div className="h-[426px]" />
          <div className="flex h-[73px] items-center justify-center bg-black">
            <svg width="5" height="8" viewBox="0 0 5 8">
              <path d="M0 0v8l5-4z" fill="#ddd" />
            </svg>
          </div>
        </div>
        <div className="flex w-[41px] flex-col items-center border-l border-[#909090] pt-[9px]">
          <svg width="4" height="16" viewBox="0 0 4 16" fill="#777">
            <path d="M1 2h2v2H1zM1 7h2v2H1zM1 12h2v2H1z" />
          </svg>
          <div className="mt-[11px] mb-[8px] h-px w-[24px] bg-[#a0a0a0]" />
          {side(
            <>
              <path d="M2.500 2.500h19v19h-19z" fill="#fff" stroke={K} />
              <path d="M2.500 2.500h19v3h-19z" fill={K} />
              <path d="M5 11h14M5 16h14M15 9v4M9 14v4" stroke={B} strokeWidth="1.500" />
            </>,
          )}
          <div className="h-[12px]" />
          {side(
            <>
              <path d="M2 18L9 2l6 16M4.500 12h9" stroke={K} strokeWidth="1.700" />
              <path d="M22 8l-8 10" stroke={K} strokeWidth="2.500" />
              <path d="M8 22c1-4 4-6 7-4 0 3-3 5-7 4z" fill={B} />
            </>,
          )}
          <div className="h-[12px]" />
          {side(
            <>
              <path d="M1.500 2h9l2 3h10v4M1.500 2v19h5" stroke="#ed9a3c" strokeWidth="1.500" fill="#fbe3c2" />
              <path d="M8 9h15v13H8z" fill="#fff" stroke={K} />
              <circle cx="13" cy="13" r="2" fill="#ed9a3c" />
              <path d="M9 21l5-4 3 2 3-4 2 3v3z" fill="#4aa3dc" />
            </>,
          )}
          <div className="h-[9px]" />
          {side(
            <>
              <circle cx="12" cy="12" r="10" fill="#fff" stroke={K} strokeWidth="1.300" />
              <path d="M17 6l-3 8-6 4 3-8z" fill={B} />
            </>,
          )}
          <div className="h-[10px]" />
          {side(
            <text x="1" y="18" fontSize="22" fontStyle="italic" fill={B} fontFamily="Liberation Serif">
              fx
            </text>,
          )}
        </div>
      </div>
      <div className="flex h-[20px] items-center border-t border-[#808080] whitespace-nowrap">
        <div className="h-full w-[249px] border-r border-white pt-[3px] pl-[10px]">Sheet 1 of 1</div>
        <div className="h-full w-[349px] border-r border-white" />
        <div className="h-full w-[288px] border-r border-[#808080] pt-[3px] pl-[8px]">Default Page Style</div>
        <div className="h-full w-[262px] border-r border-[#808080] pt-[3px] text-center">English (USA)</div>
        <div className="h-full w-[69px] border-r border-[#808080]" />
        <div className="flex h-full w-[29px] items-center justify-center border-r border-[#808080]">
          <svg width="16" height="14" viewBox="0 0 16 14" fill="none" stroke="#555">
            <path d="M1 5h7v6H1zM11 1h4M13 1v12M11 13h4" />
          </svg>
        </div>
        <div className="flex h-full w-[28px] items-center justify-center border-r border-[#999]">
          <svg width="11" height="14" viewBox="0 0 11 14" fill="#fff" stroke="#555">
            <path d="M.5.5h7l3 3v10H.5zM3 6h5M3 9h5" />
          </svg>
        </div>
        <div className="h-full w-[30px] border-r border-[#808080]" />
        <div className="h-full w-[425px] border-r border-white pt-[3px] text-center">Average: ; Sum: 0</div>
        <div className="flex h-full w-[143px] items-center border-r border-white">
          <svg width="142" height="16" viewBox="0 0 142 16" fill="none">
            <path d="M8 8h10M126 8h11M131.500 3v10" stroke="#666" strokeWidth="2" />
            <path d="M24 8h97" stroke="#000" strokeWidth="1.500" />
            <path d="M74 3h-4v10h4" stroke="#333" fill="#ccc" />
          </svg>
        </div>
        <div className="pl-[6px]">100%</div>
      </div>
    </div>
  );
}

/* ------------------------------------------------------------------ */
/* Orange: sidebar                                                     */
/* ------------------------------------------------------------------ */

const D = "#333333";
const G = "#a9a9a9";
const dots = (pts: number[][], r: number, fill: string) => pts.map((p, i) => <circle key={fill + i} cx={p[0]} cy={p[1]} r={r} fill={fill} />);

const heat = ["#aaa", "#c4c4c4", "#ddd", "#ccc", "#444", "#333", "#ddd", "#aaa", "#999", "#ddd", "#888", "#666", "#bbb", "#555", "#aaa", "#777", "#ccc", "#999", "#888", "#ddd", "#777", "#555", "#ccc", "#aaa", "#ddd", "#999", "#666", "#bbb", "#aaa", "#ccc", "#999", "#555", "#ddd", "#888", "#777", "#ddd"];

const widgets: [string, string[], React.ReactNode][] = [
  [
    "tree",
    ["Tree", "Viewer"],
    <>
      <path d="M31 5v14M15.500 16V9.500L31 6l15.500 3.500V20M46 20v8l-15 4v13M31 31l15-3.500V38" stroke="#777" strokeWidth="1.700" fill="none" />
      <path d="M10 14h11v9H10zM26 15.500h10v9H26zM41.500 36h9.500v9h-9.500z" fill={D} />
      <ellipse cx="46" cy="18.500" rx="5" ry="5.500" fill={D} />
      <ellipse cx="30.500" cy="38" rx="5" ry="5" fill={D} />
    </>,
  ],
  [
    "box",
    ["Box Plot"],
    <g stroke="#888" strokeWidth="1.700" fill="none">
      <path d="M23 15v9M18.500 15h9M19 24h8.500v18H19zM19 34.500h8.500M23 42v5M18.500 47h9M40 25v6M35.500 25h9M35 31h9v7h-9zM35 34h9M40 38v7M35.500 45h9M23 7v5M20.500 9.500h5M40 8v5M37.500 10.500h5M40 16v5M37.500 18.500h5" />
    </g>,
  ],
  ["dist", ["Distribu..."], <path d="M14.500 18h8v-5h9v9h7v9h8v10h-32z" fill={D} />],
  [
    "scatter",
    ["Scatter", "Plot"],
    <>
      <path d="M15 9v35h35" stroke={G} strokeWidth="1.800" fill="none" />
      {dots([[46, 15], [37, 20], [45, 24], [29, 24], [37, 30], [26, 32], [21, 38], [31, 37]], 2.900, D)}
    </>,
  ],
  [
    "line",
    ["Line Plot"],
    <>
      <path d="M15.500 9v34.500h35" stroke="#bbb" strokeWidth="1.800" fill="none" />
      <path d="M16 17.500h8l18 18.500h8M16 36h8l18-18.500h8" stroke={D} strokeWidth="2" fill="none" />
    </>,
  ],
  [
    "sieve",
    ["Sieve", "Diagram"],
    <>
      <path d="M15 10h14v19H15zM30.500 10h19v4.500h-19zM30.500 16h19v8.500h-19z" fill={D} />
      <path d="M15 31h14v13H15zM30.500 26h19v18h-19z" fill="#6b6b6b" />
      <path d="M19.500 10v34M24.500 10v34M35 10v34M40 10v34M45 10v34M15 14h14M15 19h14M15 24h14M15 35.500h14M15 40h14M30 20h20M30 31h20M30 36h20M30 40h20" stroke="#eee" strokeWidth=".6" />
    </>,
  ],
  ["mosaic", ["Mosaic", "Display"], <path d="M15 10h25v9.500H15zM15 22h25v22H15zM42 10h7v17.500h-7zM42 30h7v9h-7zM42 41h7v3h-7z" fill={D} />],
  [
    "freeviz",
    ["FreeViz"],
    <>
      <path d="M32 8v20L15 38M32 28l16 10" stroke="#bbb" strokeWidth="2" fill="none" />
      {dots([[24, 13], [18, 19], [25, 22], [18, 28], [38, 13], [44, 19], [40, 25], [46, 29], [32, 35], [26, 39], [37, 39]], 2.700, "#aaa")}
      <path d="M10 14l11-6M40 6l11 8M40 45H27" stroke={D} strokeWidth="1.700" />
      <path d="M17 6l7 0-4 5zM54 16l-7-1 4-5zM25 45l6-3v6z" fill={D} />
    </>,
  ],
  [
    "linproj",
    ["Linear", "Projection"],
    <>
      <path d="M28.500 28L21 10M28.500 28h24M28.500 28L12 42" stroke="#bbb" strokeWidth="2" fill="none" />
      {dots([[18, 11], [27, 10], [23, 16]], 2.900, "#999")}
      {dots([[36, 25], [43, 21], [51, 21], [44, 28]], 2.900, "#666")}
      {dots([[16, 34], [24, 35], [18, 42], [26, 42]], 2.900, D)}
    </>,
  ],
  [
    "radviz",
    ["Radviz"],
    <>
      <ellipse cx="32" cy="27" rx="19" ry="20" stroke="#bbb" strokeWidth="1.500" fill="none" />
      <path d="M32 4v5M32 45v5M10 27h5M49 27h5" stroke="#bbb" strokeWidth="2" />
      {dots([[25, 15], [32, 17], [39, 15]], 2.900, "#999")}
      {dots([[43, 28], [37, 35], [44, 34]], 2.900, "#666")}
      {dots([[20, 31], [27, 30], [24, 37]], 2.900, D)}
    </>,
  ],
  ["heat", ["Heat Map"], <>{heat.map((c, i) => <rect key={i} x={17 + (i % 6) * 5} y={12 + Math.floor(i / 6) * 5} width="5" height="5" fill={c} />)}</>],
  [
    "venn",
    ["Venn", "Diagram"],
    <>
      <path d="M32 13c-5 4-6 9-6 11 4-3 8-3 12 0 0-3-1-8-6-11zM20 28c2 4 5 6 12 6s10-2 12-6l-5-4H26z" fill="#999" />
      <g stroke="#4a4a4a" strokeWidth="3" fill="none">
        <circle cx="25" cy="21" r="13" />
        <circle cx="39" cy="21" r="13" />
        <circle cx="32" cy="34" r="13" />
      </g>
    </>,
  ],
  [
    "silh",
    ["Silhouette", "Plot"],
    <path d="M14 9h36v4H14zM14 14h33.500v4H14zM14 18.800h31.500v4H14zM14 23.500h30v4H14zM14 28.300h27v4H14zM14 33h23v3.600H14zM14 37h15v4H14zM14 41.500h4.500v4H14z" fill={G} />,
  ],
  [
    "pyt",
    ["Pythago...", "Tree"],
    <g stroke={D} strokeWidth="1.700">
      <path d="M20.500 34h14v14h-14z" fill="#c9c9c9" />
      <path d="M33 20l7 4-6 11-9-5z" fill="#6b6b6b" />
      <path d="M28 8l10-2 2 10-10 1z" fill={D} />
      <path d="M40 14l8 2-2 8-8-2zM19 25l5 4-3 6-6-3z" fill="#f1f1f1" />
    </g>,
  ],
  [
    "pytf",
    ["Pythago...", "Forest"],
    <g stroke={D} strokeWidth="1.200">
      <path d="M18.500 31h9v9h-9zM37.500 31h9v9h-9z" fill="#c9c9c9" />
      <path d="M17 15l7-1 0 6-6 0zM11 20l6 1-1 5-6-1zM18 22l6 4-2 5-5-4zM44 15l6-1 1 6-5 1zM35 27l4 2-2 4-4-2z" fill="#f1f1f1" />
      <path d="M44 20l6 3-4 8-5-4zM49 20l5 1-2 5-4-1zM24 26l5 1-2 4z" fill="#555" />
    </g>,
  ],
  [
    "cn2",
    ["CN2 Rule", "Viewer"],
    <>
      {dots([[19, 27], [27, 27]], 3.800, D)}
      <path d="M31 27h7" stroke="#666" strokeWidth="2" />
      <path d="M37 23.500l4.500 3.500-4.500 3.500z" fill="#666" />
      <path d="M42.500 23.500h7v7.500h-7z" fill={D} />
    </>,
  ],
  [
    "nomo",
    ["Nomogr..."],
    <path d="M28.500 9v32M14.500 17.500h29M21 32.500h29M15 14v7M21 15.500v4M36 15v5M43 14v7M21.500 29v7M36 30.500v4M43 30.500v4M50 29v7" stroke={D} strokeWidth="1.800" fill="none" />,
  ],
];

function CatRow({ color, label, icon, active, h = "h-[30px]" }: { color: string; label: string; icon: React.ReactNode; active?: boolean; h?: string }) {
  return (
    <div className={"flex shrink-0 items-stretch " + h + (active ? " bg-linear-to-b from-[#ffb3ae] from-60% to-[#eda29f]" : " bg-linear-to-b from-[#f2f2f2] from-60% to-[#dcdcdc]")}>
      <div className={"flex w-[38px] items-center justify-center " + color + (active ? "" : " border-r border-[#b5b5b5]")}>
        <svg width="26" height="26" viewBox="0 0 26 26" fill="none">
          {icon}
        </svg>
      </div>
      <span className={"pl-[9px] text-[14px] leading-[28px] " + (active ? "text-[#111]" : "text-[#333]")}>{label}</span>
    </div>
  );
}

const tableIcon = (
  <>
    <path d="M1.500 1.500h23v23h-23z" fill="#fff" stroke={D} strokeWidth="1.500" />
    <path d="M1 1h24v5H1z" fill={D} />
    <path d="M7.500 6v18M13 6v18M19 6v18M2 12h22M2 18h22" stroke="#888" />
  </>
);

function OrangeSidebar() {
  return (
    <div className="flex w-[273px] shrink-0 flex-col border-r border-l border-r-[#b5babd] border-l-[#aeb2b8] bg-[#efebe7]">
      <div className="flex h-[18px] shrink-0 items-center justify-end border-b-2 border-[#b5b5b5] bg-linear-to-b from-[#808080] to-[#666] pr-[4px] text-[15px] leading-none font-bold text-black">«</div>
      <div className="h-[1px] shrink-0 bg-[#b5b5b5]" />
      <CatRow h="h-[29px]" color="bg-[#ffd39f]" label="Data" icon={tableIcon} />
      <CatRow
        active
        color=""
        label="Visualize"
        icon={
          <>
            <path d="M2 2v22h22" stroke="#555" strokeWidth="1.500" />
            {dots([[7, 19], [14, 10], [12, 18], [21, 9]], 2.600, "#444")}
            {dots([[10, 14], [17, 15], [15, 19]], 2.600, "#888")}
          </>
        }
      />
      <div className="grid h-[429px] shrink-0 grid-cols-[repeat(4,64px)] content-start border-b border-[#b5b5b5] bg-[#f1f1f1]">
        {widgets.map(([id, label, icon]) => (
          <div key={id} className="flex h-[84px] flex-col items-center">
            <svg width="64" height="54" viewBox="0 0 64 54" className="shrink-0">
              {icon}
            </svg>
            <div className="flex h-[28px] flex-col justify-center text-center text-[10px] leading-[12px] text-[#333]">
              {label.map((l) => (
                <span key={l}>{l}</span>
              ))}
            </div>
          </div>
        ))}
      </div>
      <CatRow
        color="bg-linear-to-b from-[#fbc1da] to-[#e9acc5]"
        label="Model"
        icon={
          <>
            <path d="M4 8V4h19v4M13 1v7M9 18v-4h9v4M13 11v3" stroke={D} strokeWidth="1.300" />
            {dots([[23, 9], [9, 21]], 2.400, D)}
            {dots([[4, 9], [18, 21]], 2.400, "#777")}
            <path d="M11 7h4v4h-4z" fill={D} />
          </>
        }
      />
      <CatRow
        color="bg-linear-to-b from-[#c5f3ef] to-[#aadedb]"
        label="Evaluate"
        icon={
          <>
            <path d="M9 2v22M2 8.500h23M12 4l2 2 3-4M20 2l4 4M24 2l-4 4M3 13l2 2 3-4M3 18l4 4M7 18l-4 4" stroke={D} strokeWidth="1.300" />
            {dots([[14, 13.500], [21.500, 19.500]], 2.600, D)}
            {dots([[21.500, 13.500], [14, 19.500]], 2.600, "#888")}
          </>
        }
      />
      <CatRow
        color="bg-linear-to-b from-[#cbe0ef] to-[#b4c9d8]"
        label="Unsupervised"
        icon={
          <>
            {dots([[8, 5], [17, 4], [6, 9.500], [13, 7], [20, 8], [11, 11], [16, 11]], 2.200, D)}
            {dots([[9, 15], [14, 15], [5, 18], [18, 18], [10, 20.500], [15, 20.500]], 2.200, "#888")}
          </>
        }
      />
      <div className="flex-1" />
      <div className="h-[8px] shrink-0 border-t-2 border-b-2 border-[#b5b5b5] bg-[#f0f0f0]" />
      <div className="h-[148px] shrink-0 bg-white pt-[4px] pl-[4px] text-[12px] leading-[15px] whitespace-nowrap text-black">
        <div className="text-[13px] leading-[16px] font-bold text-[#ffa500]">SVM</div>
        <div className="pt-[13px]">Support Vector Machines map inputs to</div>
        <div>higher-dimensional feature spaces.</div>
        <div className="pt-[12px] text-[#f5a01e] underline underline-offset-2">more...</div>
      </div>
      <div className="grid h-[29px] shrink-0 grid-cols-6 border-t border-b border-[#999] bg-linear-to-b from-[#858585] to-[#626262]">
        {[
          <path key="i" d="M11 5h4v4h-4zM9.500 11H15v8h2v2H9v-2h2v-6H9.500z" fill="#fff" />,
          <path key="h" d="M9.500 4v18M17.500 4v18M4 9.500h18M4 17.500h18" stroke="#fff" strokeWidth="1.800" />,
          <path key="t" d="M4 4h18v6h-2c0-2-1-3-3-3h-2v12c0 1 1 1.500 3 1.500V22H8v-1.500c2 0 3-.5 3-1.500V7H9c-2 0-3 1-3 3H4z" fill="#fff" />,
          <path key="a" d="M6 7l8 6 2-3 3 11-11-2 3-3-6-8z" fill="#fff" />,
          <path key="p" d="M6 4h5v18H6zM15 4h5v18h-5z" fill="#fff" />,
          <g key="q">
            <circle cx="13" cy="13" r="8.300" stroke="#fff" strokeWidth="1.700" />
            <path d="M10 10.500c0-4 6-4 6-.5 0 2-3 2-3 5M13 17v2" stroke="#fff" strokeWidth="2.300" />
          </g>,
        ].map((p, i) => (
          <div key={i} className={"relative flex items-center justify-center " + (i === 5 ? "bg-[#ffa840]" : "border-r border-[#999]")}>
            <svg width="26" height="26" viewBox="0 0 26 26" fill="none">
              {p}
            </svg>
            {(i === 2 || i === 3) && (
              <svg className="absolute top-[2px] right-[2px]" width="5" height="4" viewBox="0 0 5 4">
                <path d="M0 0h5L2.500 4z" fill="#fff" />
              </svg>
            )}
          </div>
        ))}
      </div>
    </div>
  );
}

/* ------------------------------------------------------------------ */
/* Orange: canvas                                                      */
/* ------------------------------------------------------------------ */

const LINK = "#9caeb7";

function Node({ x, y, label, pink, left, right, children }: Kids & { x: number; y: number; label: string; pink?: boolean; left?: boolean; right?: boolean }) {
  return (
    <g transform={`translate(${x} ${y})`}>
      <circle r="24" fill={pink ? "url(#nodePink)" : "url(#nodeOrange)"} />
      {left && <path d="M-21.500 -22.500Q-40 0 -21.500 22.500" stroke={LINK} strokeWidth="3" fill="none" strokeLinecap="round" />}
      {right && <path d="M21.500 -22.500Q40 0 21.500 22.500" stroke={LINK} strokeWidth="3" fill="none" strokeLinecap="round" />}
      {children}
      <text y="49" textAnchor="middle" fontSize="12">
        {label}
      </text>
    </g>
  );
}

function Canvas() {
  return (
    <svg className="absolute top-0 left-0" width="1646" height="1003" viewBox="2194 48 1646 1003" fontFamily="DejaVu Sans" fill="#000">
      <defs>
        <radialGradient id="nodeOrange">
          <stop offset="0" stopColor="#ffe9d0" />
          <stop offset="1" stopColor="#ffd39f" />
        </radialGradient>
        <radialGradient id="nodePink">
          <stop offset="0" stopColor="#fde4ef" />
          <stop offset="1" stopColor="#fac1d9" />
        </radialGradient>
      </defs>
      <g stroke={LINK} strokeWidth="2" fill="none">
        <path d="M2275 234C2325 234 2285 326 2335 326" />
        <path d="M2397 326C2450 326 2402 431 2456 431" />
        <path d="M2514 415.500C2532 413 2545 398 2560 387" />
        <path d="M2517 422.500C2532 421 2544 414 2560 408" />
        <path d="M2518 431C2532 430 2545 426 2560 422" />
        <path d="M2517 439.500C2532 439 2545 438 2560 437" />
        <path d="M2514 447C2548 447 2536 500 2556 524" />
        <path d="M2816 101C2790 101 2760 140 2710 200" />
        <path d="M2878 101C2925 101 2960 165 3020 228" />
        <path d="M2885 246h35M2885 313l35-12M2885 405c12 1 24-4 35-10" />
      </g>
      <g fill={LINK}>
        {[[2274.500, 234], [2335.500, 326], [2397, 326], [2456, 431], [2514, 415.500], [2517, 422.500], [2518, 431], [2517, 439.500], [2514, 447], [2816, 101], [2878, 101]].map((p, i) => (
          <circle key={i} cx={p[0]} cy={p[1]} r="3.700" />
        ))}
      </g>
      <text x="2232" y="137" fontSize="16">
        Setups and selecting data
      </text>
      <text fontSize="12" transform="translate(2311 265) rotate(90)">
        Data
      </text>
      <text fontSize="12" transform="translate(2433 364) rotate(90)">
        Data
      </text>
      <text fontSize="12" transform="translate(2548 471) rotate(90)">
        Data
      </text>
      <text fontSize="12" transform="translate(2959 151) rotate(51)">
        Learner
      </text>
      <text x="2906" y="295" textAnchor="end" fontSize="12">
        Linear Regression
      </text>
      <Node x={2243} y={234} label="CSV File Import" right>
        <path d="M-9-12.500H4l5 5v20H-9z" fill="#fff" stroke={D} strokeWidth="1.500" />
        <path d="M-7-7.500H2M-7-4.500H7M-7-1.500H7M-7 1.500H7" stroke={D} strokeWidth="1.300" strokeDasharray="3.500 1" />
        <path d="M3-13l6.500 6H3z" fill={D} />
        <text y="11" textAnchor="middle" fontSize="7" fontWeight="700">
          CSV
        </text>
      </Node>
      <Node x={2366} y={326} label="Select Columns" left right>
        <g transform="translate(-13 -13)">{tableIcon}</g>
        <path d="M-4-8h8V12h-8z" fill="#aaa" />
        <path d="M-2 2v7l-3-2-1 2 5 7h8l2-8-7-2V2z" fill={D} stroke="#fff" strokeWidth=".6" />
      </Node>
      <Node x={2487} y={431} label="Data Table" left right>
        <g transform="translate(-13 -13)">{tableIcon}</g>
      </Node>
      <Node x={2847} y={101} label="Neural Network" pink left right>
        <path d="M-9-5L7-11M-9-5L7 0M-9-5L7 10M-9 5L7-9M-9 5L7 1M-9 5l16 6" stroke="#777" strokeWidth="1.300" />
        {dots([[-10, -5], [-10, 6], [10, -11], [10, 0], [10, 11]], 3.300, D)}
      </Node>
    </svg>
  );
}

/* ------------------------------------------------------------------ */
/* Orange: dialogs                                                     */
/* ------------------------------------------------------------------ */

const BORDER = "border border-[#b3aeab]";

const Radio = ({ on }: { on?: boolean }) => (
  <span className="flex size-[14px] shrink-0 items-center justify-center rounded-full border border-[#aaa5a2] bg-white">
    {on && <span className="size-[7px] rounded-full bg-[#3a3a3a]" />}
  </span>
);

const Check = ({ on }: { on?: boolean }) => (
  <span className="flex size-[14px] shrink-0 items-center justify-center border border-[#aaa5a2] bg-white">
    {on && (
      <svg width="10" height="10" viewBox="0 0 10 10" fill="none" stroke="#111" strokeWidth="1.900">
        <path d="M1.500 5l2.500 4L8.500 1" />
      </svg>
    )}
  </span>
);

function Spin({ v, w, off, up = true, down = true }: { v: string; w: string; off?: boolean; up?: boolean; down?: boolean }) {
  return (
    <div className={"flex h-[22px] shrink-0 rounded-[2px] " + BORDER + " " + w + (off ? " bg-[#efebe7] text-[#c4c1be]" : " bg-white")}>
      <span className="flex-1 pr-[6px] text-right leading-[20px]">{v}</span>
      <span className="flex w-[14px] flex-col items-center justify-center gap-[4px] border-l border-[#b3aeab] bg-[#f8f7f6]">
        <svg width="8" height="4" viewBox="0 0 8 4">
          <path d="M0 4h8L4 0z" fill={off ? "#d8d5d2" : up ? "#555" : "#aaa"} />
        </svg>
        <svg width="8" height="4" viewBox="0 0 8 4">
          <path d="M0 0h8L4 4z" fill={off ? "#e0dedc" : down ? "#555" : "#aaa"} />
        </svg>
      </span>
    </div>
  );
}

function Drop({ w, h = "h-[23px]", children, split }: Kids & { w: string; h?: string; split?: boolean }) {
  return (
    <div className={"flex shrink-0 items-stretch rounded-[2px] " + BORDER + " " + h + " " + w + (split ? " bg-white" : " bg-linear-to-b from-white to-[#ececea]")}>
      <span className="flex flex-1 items-center pl-[4px]">{children}</span>
      <span className={"flex w-[20px] items-center justify-center " + (split ? "border-l border-[#b3aeab] bg-[#f8f7f6]" : "")}>
        <svg width="8" height="5" viewBox="0 0 8 5">
          <path d="M0 0h8L4 5z" fill="#555" />
        </svg>
      </span>
    </div>
  );
}

const boxCls = "shrink-0 rounded-[2px] border border-[#d6d2ce] bg-[#ece8e4]";

const inIcon = (
  <svg width="14" height="15" viewBox="0 0 14 15" fill="none" stroke="#777" strokeWidth="1.300">
    <path d="M4.500 4V1h8v13h-8v-3M0 7.500h8M6 5.500l2.500 2-2.500 2" />
  </svg>
);
const outIcon = (
  <svg width="14" height="15" viewBox="0 0 14 15" fill="none" stroke="#777" strokeWidth="1.300">
    <path d="M9 4V1H1v13h8v-3M5 7.500h8M10.500 5.500l2.500 2-2.500 2" />
  </svg>
);

function Foot({ children }: Kids) {
  return (
    <>
      <svg width="12" height="16" viewBox="0 0 12 16" fill="none">
        <path d="M2 5.500C2 0 10 0 10 5c0 3-4 2.500-4 6M6 12.500v3" stroke="#888" strokeWidth="3" />
        <path d="M2 5.500C2 0 10 0 10 5c0 3-4 2.500-4 6" stroke="#f3f1ee" />
      </svg>
      <svg className="ml-[8px]" width="12" height="15" viewBox="0 0 12 15" fill="none" stroke="#888" strokeWidth="1.200">
        <path d="M1 1h6l4 4v9H1zM3 6h5M3 8.500h6M3 11h6" />
      </svg>
      <span className="ml-[13px] h-[18px] w-px bg-black" />
      {children}
    </>
  );
}

function SvmDialog() {
  return (
    <div className="absolute top-[145px] left-[359px] flex h-[615px] w-[341px] flex-col rounded-t-[6px] border border-[#b4b8be] bg-[#efebe7] text-[12px] leading-[15px] text-black shadow-[0_2px_12px_3px_rgba(0,0,0,0.45)]">
      <div className="flex h-[27px] shrink-0 items-center rounded-t-[5px] bg-linear-to-b from-[#f3f3f3] to-[#d5d5d5]">
        <div className="w-[164px] pl-[9px]">
          <div className="size-[18px] rounded-full border-2 border-[#b5bfd0] bg-linear-to-b from-[#dfe3ee] to-[#f7f8fb]" />
        </div>
        <span className="font-['Noto_Sans'] text-[14.300px] text-[#77736d]">SVM</span>
      </div>
      <div className="flex flex-1 flex-col px-[6px]">
        <div className="mt-[7px] h-[18px] shrink-0 pl-[3px]">Name</div>
        <div className={"h-[42px] px-[8px] pt-[8px] " + boxCls}>
          <div className={"h-[23px] rounded-[2px] bg-white pl-[2px] leading-[21px] text-[#999] " + BORDER}>SVM</div>
        </div>
        <div className="mt-[5px] h-[18px] shrink-0 pl-[3px]">SVM Type</div>
        <div className={"h-[127px] px-[8px] pt-[9px] " + boxCls}>
          {[
            ["SVM", "", "Cost (C):", "0.15", "off"],
            ["", "", "Regression loss epsilon (ε):", "0.10", "off"],
            ["ν-SVM", "on", "Regression cost (C):", "0.10", ""],
            ["", "", "Complexity bound (ν):", "1.00", ""],
          ].map((r, i) => (
            <div key={i} className="flex h-[28px] items-start">
              {r[0] && (
                <span className="flex items-center gap-[6px] pt-[3px]">
                  <Radio on={r[1] === "on"} />
                  {r[0]}
                </span>
              )}
              <span className="flex-1 pt-[4px] pr-[5px] text-right">{r[2]}</span>
              <Spin v={r[3]} w="w-[74px]" off={r[4] === "off"} up={i !== 3} down={i !== 2} />
            </div>
          ))}
        </div>
        <div className="mt-[13px] h-[18px] shrink-0 pl-[3px]">Kernel</div>
        <div className={"flex h-[133px] px-[8px] " + boxCls}>
          <div className="flex w-[119px] flex-col pt-[3px]">
            {["Linear", "Polynomial", "RBF", "Sigmoid"].map((k) => (
              <span key={k} className="flex h-[31px] items-center gap-[6px]">
                <Radio on={k === "RBF"} />
                {k}
              </span>
            ))}
          </div>
          <div className="flex-1 pt-[8px]">
            <div>Kernel: exp(-g|x-y|²)</div>
            <div className="mt-[5px] flex items-center justify-end gap-[9px]">
              g:
              <Spin v="10.00" w="w-[80px]" up={false} />
            </div>
          </div>
        </div>
        <div className="mt-[13px] h-[18px] shrink-0 pl-[3px]">Optimization Parameters</div>
        <div className={"h-[71px] px-[8px] pt-[9px] " + boxCls}>
          <div className="flex h-[28px] items-start justify-between">
            <span className="pt-[4px]">Numerical tolerance:</span>
            <Spin v="0.0001" w="w-[100px]" down={false} />
          </div>
          <div className="flex h-[28px] items-start justify-between">
            <span className="flex items-center gap-[5px] pt-[3px]">
              <Check on />
              Iteration limit:
            </span>
            <Spin v="60" w="w-[100px]" />
          </div>
        </div>
        <div className={"mt-[31px] flex h-[43px] items-center px-[8px] " + boxCls}>
          <Check on />
          <div className={"ml-[14px] h-[24px] flex-1 rounded-[2px] bg-linear-to-b from-[#fbfbfa] to-[#ececea] text-center leading-[22px] text-[#c4c1be] " + BORDER}>Apply Automatically</div>
        </div>
        <div className="mt-[8px] flex h-[20px] items-center pl-[4px]">
          <Foot>
            <span className="ml-[11px]">{inIcon}</span>
            <span className="ml-[6px]">315</span>
          </Foot>
        </div>
      </div>
    </div>
  );
}

const results = [
  ["SVM", "0.000", "0.018", "0.012", "0.867"],
  ["Neural Network", "0.000", "0.013", "0.010", "0.929"],
  ["Linear Regression", "0.002", "0.043", "0.029", "0.281"],
];
const rw = ["w-[113px]", "w-[54px]", "w-[63px]", "w-[55px]", "w-[43px]"];
const compare = [
  ["SVM", "", "0.812", "0.000"],
  ["Neural Network", "0.188", "", "0.000"],
  ["Linear Regression", "1.000", "1.000", ""],
];

function Opt({ on, children, h = "h-[25px]" }: Kids & { on?: boolean; h?: string }) {
  return (
    <div className={"flex items-center gap-[6px] " + h}>
      <Radio on={on} />
      {children}
    </div>
  );
}

function TestDialog() {
  return (
    <div className="absolute top-[173px] left-[720px] flex h-[580px] w-[782px] flex-col rounded-t-[6px] border border-[#a9abb0] bg-[#efebe7] text-[12px] leading-[15px] text-black shadow-[0_3px_18px_6px_rgba(0,0,0,0.5)]">
      <div className="flex h-[27px] shrink-0 items-center rounded-t-[5px] bg-linear-to-b from-[#ececec] to-[#cfcfcf] to-40%">
        <div className="w-[370px] pl-[10px]">
          <span className="flex h-[17px] w-[58px] items-center justify-between rounded-full bg-[#b7c3c9]">
            {["M5 5l6 6M11 5l-6 6", "M4.500 8h7", "M4.500 8h7M8 4.500v7"].map((d) => (
              <span key={d} className="size-[17px] rounded-full border border-[#a3b0c8] bg-[#e8ebf2]">
                <svg width="15" height="15" viewBox="0.500 0.500 15 15" stroke="#555" strokeWidth="2">
                  <path d={d} />
                </svg>
              </span>
            ))}
          </span>
        </div>
        <span className="font-['Noto_Sans'] text-[14.300px] text-[#55524e]">Test and Score</span>
      </div>
      <div className="flex flex-1">
        <div className="flex w-[253px] shrink-0 flex-col pl-[3px]">
          <div className="mt-[3px] h-[18px] shrink-0 pl-[3px]">Sampling</div>
          <div className={"flex h-[324px] w-[250px] flex-col px-[8px] pt-[6px] " + boxCls}>
            <Opt on>Cross validation</Opt>
            <div className="flex h-[27px] items-center justify-between pl-[20px]">
              Number of folds:
              <Drop w="w-[102px]">10</Drop>
            </div>
            <div className="flex h-[25px] items-center gap-[5px] pl-[20px]">
              <Check on />
              Stratified
            </div>
            <Opt h="h-[26px]">Cross validation by feature</Opt>
            <div className="flex h-[27px] items-center pl-[20px]">
              <Drop split h="h-[24px]" w="w-[211px]">
                <span className="mr-[5px] ml-[2px] flex h-[13px] w-[14px] items-center justify-center rounded-[2px] bg-[#1d9a41] text-[11px] text-white">C</span>
                Selected
              </Drop>
            </div>
            <Opt h="h-[26px]">Random sampling</Opt>
            <div className="flex h-[27px] items-center justify-between pl-[20px]">
              Repeat train/test:
              <Drop w="w-[97px]">10</Drop>
            </div>
            <div className="flex h-[27px] items-center justify-between pl-[20px]">
              Training set size:
              <Drop w="w-[101px]">66 %</Drop>
            </div>
            <div className="flex h-[25px] items-center gap-[5px] pl-[20px]">
              <Check on />
              Stratified
            </div>
            <Opt>Leave one out</Opt>
            <Opt>Test on train data</Opt>
            <Opt>Test on test data</Opt>
          </div>
          <div className="mt-[21px] h-[18px] shrink-0 pl-[3px]">Model Comparison</div>
          <div className={"h-[69px] w-[250px] px-[8px] pt-[8px] " + boxCls}>
            <Drop w="w-[231px]">Mean square error</Drop>
            <div className="mt-[4px] flex items-center gap-[5px]">
              <Check />
              Negligible difference:
              <span className={"ml-auto h-[23px] w-[70px] rounded-[2px] pr-[4px] text-right leading-[21px] text-[#c4c1be] " + BORDER}>0.1</span>
            </div>
          </div>
          <div className="mt-[77px] flex h-[20px] items-center pl-[8px]">
            <Foot>
              <span className="ml-[11px]">{inIcon}</span>
              <span className="ml-[5px]">315</span>
              <span className="ml-[11px]">{outIcon}</span>
              <span className="ml-[4px]">315</span>
            </Foot>
          </div>
        </div>
        <div className="flex w-[9px] shrink-0 pt-[256px] pl-[1px]">
          <svg width="7" height="13" viewBox="0 0 7 13" fill="none" stroke="#aaa">
            <path d="M1 1l5 5.500L1 12" />
          </svg>
        </div>
        <div className="flex w-[514px] flex-col">
          <div className="mt-[8px] h-[17px] shrink-0 pl-[2px]">Evaluation Results</div>
          <div className={"h-[229px] w-[511px] px-[8px] pt-[9px] " + boxCls}>
            <div className="h-[210px] border border-[#aaa5a2] bg-white">
              <div className="flex h-[19px] bg-[#efebe7]">
                {["Model", "MSE", "RMSE", "MAE", "R2"].map((h, i) => (
                  <span key={h} className={"flex items-center justify-center border-b border-[#aaa5a2] bg-linear-to-b from-[#fbf9f7] to-[#e9e6e2] " + rw[i] + (i < 4 ? " border-r border-r-[#c9c5c1]" : "")}>
                    {h === "Model" ? (
                      <>
                        <span className="flex-1 pl-[18px] text-center">Model</span>
                        <svg className="mr-[4px] ml-[6px]" width="8" height="5" viewBox="0 0 8 5">
                          <path d="M0 5h8L4 0z" fill="#444" />
                        </svg>
                      </>
                    ) : (
                      h
                    )}
                  </span>
                ))}
              </div>
              {results.map((r, i) => (
                <div key={i} className={"flex h-[21px] w-[328px] items-center " + (i === 1 ? "bg-[#f6f5f4]" : "")}>
                  {r.map((v, j) => (
                    <span key={j} className={rw[j] + (j ? " pr-[3px] text-right" : " pl-[3px] whitespace-nowrap")}>
                      {v}
                    </span>
                  ))}
                </div>
              ))}
            </div>
          </div>
          <div className="mt-[13px] h-[18px] shrink-0">Model Comparison by MSE</div>
          <div className={"h-[229px] w-[511px] px-[8px] pt-[9px] " + boxCls}>
            <div className="flex h-[180px] flex-col border border-[#aaa5a2] bg-white">
              <div className="flex h-[19px] shrink-0 border-b border-[#aaa5a2] bg-linear-to-b from-[#fbf9f7] to-[#e9e6e2] text-center leading-[19px]">
                <span className="w-[126px]" />
                <span className="w-[122px] border-r border-[#c9c5c1]">SVM</span>
                <span className="w-[122px] border-r border-[#c9c5c1]">Neural Network</span>
                <span className="w-[121px]">Linear Regression</span>
              </div>
              {compare.map((r) => (
                <div key={r[0]} className="flex h-[30px] shrink-0 text-center leading-[29px]">
                  <span className="w-[126px] border-r border-b border-[#aaa5a2] bg-linear-to-b from-[#fbf9f7] to-[#e9e6e2] pl-[3px] text-left leading-[31px]">{r[0]}</span>
                  <span className="w-[122px] border-r border-b border-[#c0bdbb]">{r[1]}</span>
                  <span className="w-[122px] border-r border-b border-[#c0bdbb]">{r[2]}</span>
                  <span className="w-[121px] border-r border-b border-[#c0bdbb]">{r[3]}</span>
                </div>
              ))}
              <div className="w-[126px] flex-1 bg-[#efebe7]" />
            </div>
            <div className="mt-[5px] text-[10px] leading-[13px] whitespace-nowrap">
              Table shows probabilities that the score for the model in the row is higher than that of the model
              <br />
              in the column. Small numbers show the probability that the difference is negligible.
            </div>
          </div>
          <svg className="mt-[25px] ml-auto" width="12" height="12" viewBox="0 0 12 12" fill="#b5b1ad">
            <path d="M9 0h1.500v1.500H9zM9 4h1.500v1.500H9zM5 4h1.500v1.500H5zM9 8h1.500v1.500H9zM5 8h1.500v1.500H5zM1 8h1.500v1.500H1z" />
          </svg>
        </div>
      </div>
    </div>
  );
}

function OrangeWindow() {
  return (
    <div className="flex h-[1052px] w-[1919px] flex-col overflow-hidden rounded-tl-[6px] border-t border-b border-[#b0b3bd] bg-white font-['DejaVu_Sans']">
      <div className="flex h-[27px] shrink-0 items-center bg-linear-to-b from-[#f0f0f0] to-[#d5d5d5]">
        <div className="w-[924px] pl-[10px]">
          <div className="w-[60px]">
            <TitleDots />
          </div>
        </div>
        <span className="font-['Noto_Sans'] text-[14.500px] text-[#77736d]">ZnDataTesting.ows</span>
      </div>
      <Menu className="h-[20px] shrink-0 gap-[14px] border-b border-[#d6d2ce] bg-[#efebe7] pl-[10px] text-[12px] text-black" items={["_File", "_Edit", "_View", "_Widget", "_Options", "_Help"]} />
      <div className="flex flex-1">
        <OrangeSidebar />
        <div className="relative flex-1 overflow-hidden bg-white">
          <Canvas />
          <SvmDialog />
          <TestDialog />
        </div>
      </div>
    </div>
  );
}

export default function App() {
  return (
    <div className="flex h-[1080px] w-[3840px] overflow-hidden bg-[#02030d]">
      <div className="flex w-[1921px] shrink-0 flex-col">
        <Panel />
        <CalcWindow />
      </div>
      <div className="flex flex-1 flex-col">
        <OrangeWindow />
      </div>
    </div>
  );
}
